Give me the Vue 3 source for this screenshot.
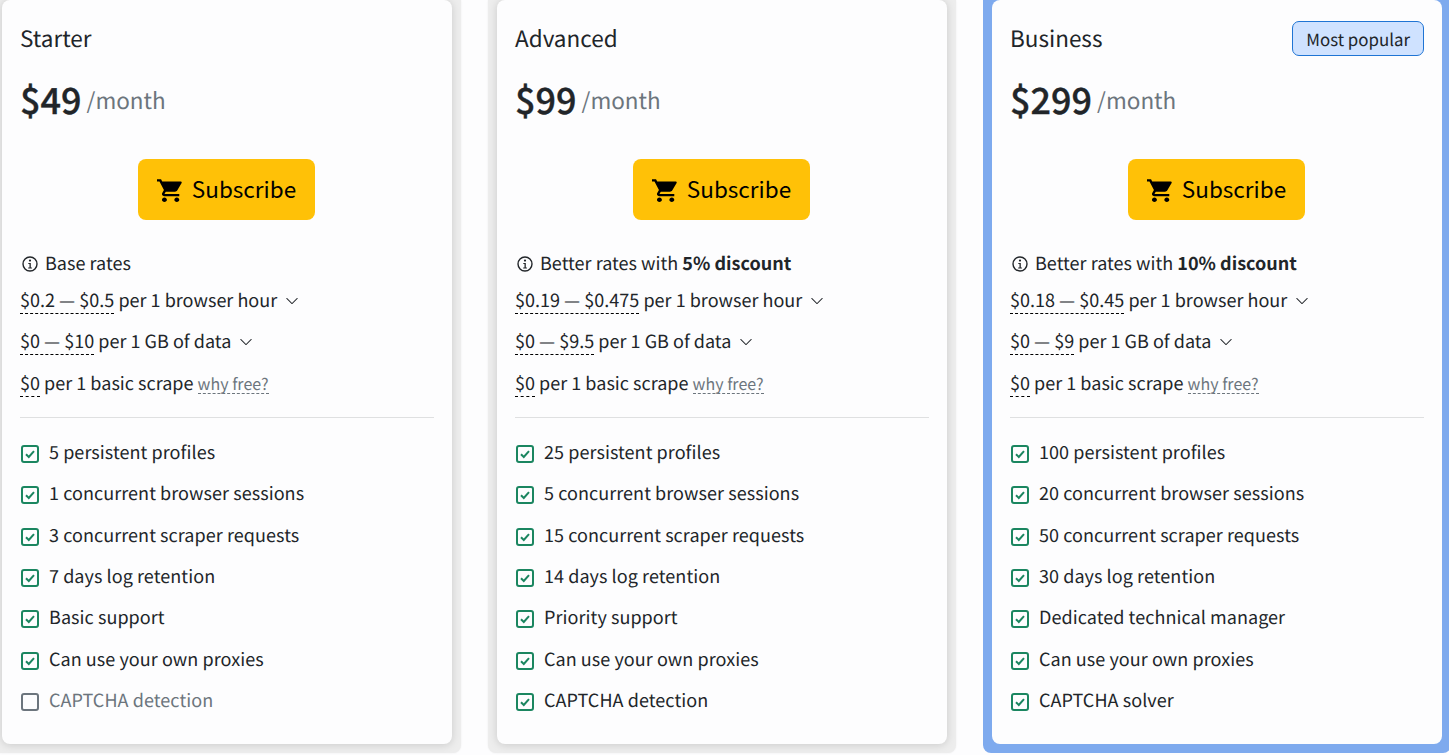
<script setup>
const plans = [
  { name: 'Starter', price: '$49', note: 'Base rates', bold: '', hour: '$0.2 — $0.5', gb: '$0 — $10',
    features: ['5 persistent profiles', '1 concurrent browser sessions', '3 concurrent scraper requests', '7 days log retention', 'Basic support', 'Can use your own proxies'], off: 'CAPTCHA detection' },
  { name: 'Advanced', price: '$99', note: 'Better rates with ', bold: '5% discount', hour: '$0.19 — $0.475', gb: '$0 — $9.5',
    features: ['25 persistent profiles', '5 concurrent browser sessions', '15 concurrent scraper requests', '14 days log retention', 'Priority support', 'Can use your own proxies', 'CAPTCHA detection'] },
  { name: 'Business', price: '$299', note: 'Better rates with ', bold: '10% discount', hour: '$0.18 — $0.45', gb: '$0 — $9', popular: true,
    features: ['100 persistent profiles', '20 concurrent browser sessions', '50 concurrent scraper requests', '30 days log retention', 'Dedicated technical manager', 'Can use your own proxies', 'CAPTCHA solver'] }
]
</script>

<template>
  <div class="page">
    <section v-for="p in plans" :key="p.name" class="frame" :class="{ popular: p.popular }">
      <div class="card">
        <div class="head">
          <span class="name">{{ p.name }}</span>
          <span v-if="p.popular" class="badge">Most popular</span>
        </div>
        <div class="price"><strong>{{ p.price }}</strong><span>/month</span></div>
        <div class="cta">
          <button class="subscribe" type="button">
            <svg width="26" height="24" viewBox="1 1 21 21" preserveAspectRatio="none" fill="currentColor"><path d="M7 18c-1.1 0-1.99.9-1.99 2S5.9 22 7 22s2-.9 2-2-.9-2-2-2zM1 2v2h2l3.6 7.59-1.35 2.45c-.16.28-.25.61-.25.96 0 1.1.9 2 2 2h12v-2H7.42c-.14 0-.25-.11-.25-.25l.03-.12.9-1.63h7.45c.75 0 1.41-.41 1.75-1.03l3.58-6.49c.08-.14.12-.31.12-.48 0-.55-.45-1-1-1H5.21l-.94-2H1zm16 16c-1.1 0-1.99.9-1.99 2s.89 2 1.99 2 2-.9 2-2-.9-2-2-2z"/></svg>
            <span class="cta-label">Subscribe</span>
          </button>
        </div>
        <div class="rate note">
          <svg class="info" width="16" height="16" viewBox="0 0 16 16"><circle cx="8" cy="8" r="7" fill="none" stroke="currentColor" stroke-width="1.4"/><circle cx="8" cy="4.6" r="1.1" fill="currentColor"/><path d="M6.3 7h2.5v4.4h1.1v1H6.2v-1h1.3V8H6.3z" fill="currentColor"/></svg>
          <span>{{ p.note }}<b v-if="p.bold">{{ p.bold }}</b></span>
        </div>
        <div class="rate r1"><span class="dash">{{ p.hour }}</span> per 1 browser hour
          <svg class="chev" width="14" height="14" viewBox="0 0 16 16" fill="currentColor"><path fill-rule="evenodd" d="M1.646 4.646a.5.5 0 0 1 .708 0L8 10.293l5.646-5.647a.5.5 0 0 1 .708.708l-6 6a.5.5 0 0 1-.708 0l-6-6a.5.5 0 0 1 0-.708z"/></svg>
        </div>
        <div class="rate r2"><span class="dash">{{ p.gb }}</span> per 1 GB of data
          <svg class="chev" width="14" height="14" viewBox="0 0 16 16" fill="currentColor"><path fill-rule="evenodd" d="M1.646 4.646a.5.5 0 0 1 .708 0L8 10.293l5.646-5.647a.5.5 0 0 1 .708.708l-6 6a.5.5 0 0 1-.708 0l-6-6a.5.5 0 0 1 0-.708z"/></svg>
        </div>
        <div class="rate r3"><span class="dash">$0</span> per 1 basic scrape <small class="why">why free?</small></div>
        <hr />
        <ul>
          <li v-for="f in p.features" :key="f">
            <svg class="box" width="18" height="18" viewBox="0 0 18 18" fill="none" stroke="#1b8660" stroke-width="2"><rect x="1" y="1" width="16" height="16" rx="2"/><path d="M5 9.2l2.8 2.8L13 6.2"/></svg>
            <span>{{ f }}</span>
          </li>
          <li v-if="p.off" class="off">
            <svg class="box" width="18" height="18" viewBox="0 0 18 18" fill="none" stroke="#6c757d" stroke-width="2"><rect x="1" y="1" width="16" height="16" rx="2"/></svg>
            <span>{{ p.off }}</span>
          </li>
        </ul>
      </div>
    </section>
  </div>
</template>

<style>
html, body { margin: 0; height: 755px; overflow: hidden; background: #fdfdfe; }
</style>

<style scoped>
.page {
  display: flex;
  gap: 27px;
  margin-left: -7px;
  width: 1470px;
  height: 755px;
  overflow: hidden;
  font-family: "Noto Sans CJK JP", "Noto Sans", sans-serif;
  font-size: 18px;
  color: #212529;
  text-rendering: geometricPrecision;
  letter-spacing: .06px;
}
.frame {
  flex: 0 0 468px;
  box-sizing: border-box;
  height: 753px;
  padding: 0 9px 9px;
  border-radius: 0 0 8px 8px;
  background: #ededed;
  box-shadow: 0 0 2px #ededed;
}
.frame.popular { background: #7eaaee; box-shadow: none; }
.card {
  box-sizing: border-box;
  height: 744px;
  padding: 19px 18px 0;
  background: #fdfdfe;
  border-radius: 8px;
  box-shadow: 0 1px 8px rgba(0, 0, 0, .15);
}
.popular .card { box-shadow: none; }
.head { display: flex; justify-content: space-between; align-items: center; height: 38px; }
.name { font-size: 22.5px; line-height: 38px; letter-spacing: 0; }
.badge {
  box-sizing: border-box;
  height: 35px;
  padding: 0 13px;
  display: flex;
  align-items: center;
  border: 1px solid #1f74d4;
  border-radius: 7px;
  background: #cfe2ff;
  font-size: 16.875px;
  letter-spacing: 0;
}
.price { display: flex; align-items: center; gap: 5px; height: 54px; margin-top: 15px; line-height: 54px; letter-spacing: 0; }
.price strong { font-size: 36px; font-weight: 500; -webkit-text-stroke: .35px #212529; }
.price span { font-size: 22.5px; color: #6c757d; margin-top: 1px; }
.cta { display: flex; justify-content: center; margin-top: 33px; padding-right: 1px; }
.subscribe {
  box-sizing: border-box;
  width: 177px;
  height: 61px;
  padding: 0;
  display: flex;
  align-items: center;
  justify-content: center;
  gap: 9px;
  border: 0;
  border-radius: 8px;
  background: #ffc107;
  color: #000;
  font: inherit;
  font-size: 22.5px;
  letter-spacing: 0;
}
.cta-label { margin-bottom: 3px; }
.rate { line-height: 27px; white-space: nowrap; letter-spacing: .02px; }
.note { display: flex; align-items: center; gap: 7px; margin-top: 30px; height: 27px; }
.note b { font-weight: 700; }
.info { margin-left: 2px; margin-top: 1px; }
.r1 { margin-top: 10px; }
.r2 { margin-top: 14px; }
.r3 { margin-top: 15px; }
.dash { display: inline-block; line-height: 25px; border-bottom: 1px dashed #000; }
.chev { margin-left: 4px; vertical-align: -1px; }
.why { font-size: 16px; color: #6c757d; border-bottom: 1px dashed #6c757d; line-height: 20px; display: inline-block; }
hr { margin: 20px 0 0; border: 0; border-top: 1px solid #dfe0e1; }
ul { list-style: none; margin: 13.75px 0 0; padding: 0; }
li { display: flex; align-items: center; gap: 10px; height: 41.37px; margin-left: 1px; }
li .box { flex: none; margin-top: 3px; }
li span { margin-top: -1px; }
.off { color: #6c757d; }
</style>
